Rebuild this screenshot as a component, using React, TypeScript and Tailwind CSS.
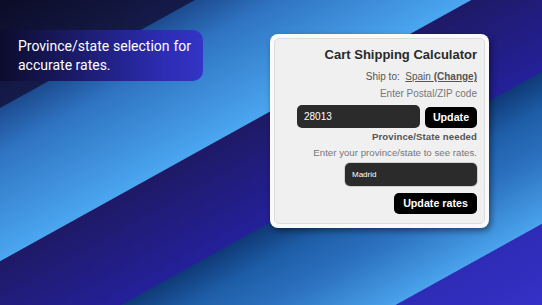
import React from "react";

export default function App() {
  return (
    <div className="w-[542px] h-[305px] overflow-hidden flex items-start bg-[linear-gradient(151deg,#0b0c26_0px,#151b4a_94px,#1d4c90_95px,#2f74c2_135px,#4ba6f0_228px,#1e1a66_229px,#24209a_325px,#0f3a78_326px,#1e5ea8_360px,#2c72c0_400px,#4aa3ec_458px,#2e2bb6_459px,#3431c6_100%)]">
      <div className="mt-[30px] w-[203px] h-[51px] rounded-r-[10px] bg-[linear-gradient(90deg,#0c0c2c_0%,#1c1c6e_40%,#2c2cb4_80%,#3434c6_100%)] pl-[18px] pt-[7px] font-['Roboto',sans-serif] text-white text-[14px] leading-[19px]">
        <p className="w-[173px] text-justify [text-align-last:justify] whitespace-nowrap">
          Province/state selection for
        </p>
        <p>accurate rates.</p>
      </div>
      <div className="ml-[67px] mt-[34px] w-[219px] h-[194px] rounded-[8px] bg-[#fafafa] p-[4px] shadow-[2px_3px_6px_rgba(0,0,0,0.45)] font-['Liberation_Sans',Arial,sans-serif]">
        <div className="h-full rounded-[5px] border border-[#dcdcdc] bg-[#f0f0f0] pr-[7px] flex flex-col items-end">
          <div className="mt-[8px] text-[13px] leading-[16px] font-bold text-[#2a2a2a]">
            Cart Shipping Calculator
          </div>
          <div className="mt-[8px] text-[10px] leading-[12px] text-[#555]">
            Ship to:{"\u00a0\u00a0"}
            <span className="underline">
              Spain <span className="font-bold">(Change)</span>
            </span>
          </div>
          <div className="mt-[5px] text-[10px] leading-[12px] text-[#777]">
            Enter Postal/ZIP code
          </div>
          <div className="mt-[5px] flex items-end gap-[5px]">
            <div className="w-[123px] h-[23px] rounded-[5px] bg-[#2b2b2b] flex items-center pl-[7px] text-[10px] text-white">
              28013
            </div>
            <button className="w-[52px] h-[21px] rounded-[5px] bg-black text-white text-[10.7px] font-bold flex items-center justify-center">
              Update
            </button>
          </div>
          <div className="mt-[3px] text-[9.6px] leading-[12px] font-bold text-[#555] tracking-[0.1px]">
            Province/State needed
          </div>
          <div className="mt-[4px] text-[9.7px] leading-[12px] text-[#777]">
            Enter your province/state to see rates.
          </div>
          <div className="mt-[4px] w-[132px] h-[23px] rounded-[5px] bg-[#2b2b2b] ring-1 ring-[#d0d0d0] flex items-center pl-[7px] text-[8px] text-white">
            Madrid
          </div>
          <button className="mt-[7px] w-[83px] h-[21px] rounded-[5px] bg-black text-white text-[10.7px] font-bold flex items-center justify-center">
            Update rates
          </button>
        </div>
      </div>
    </div>
  );
}
